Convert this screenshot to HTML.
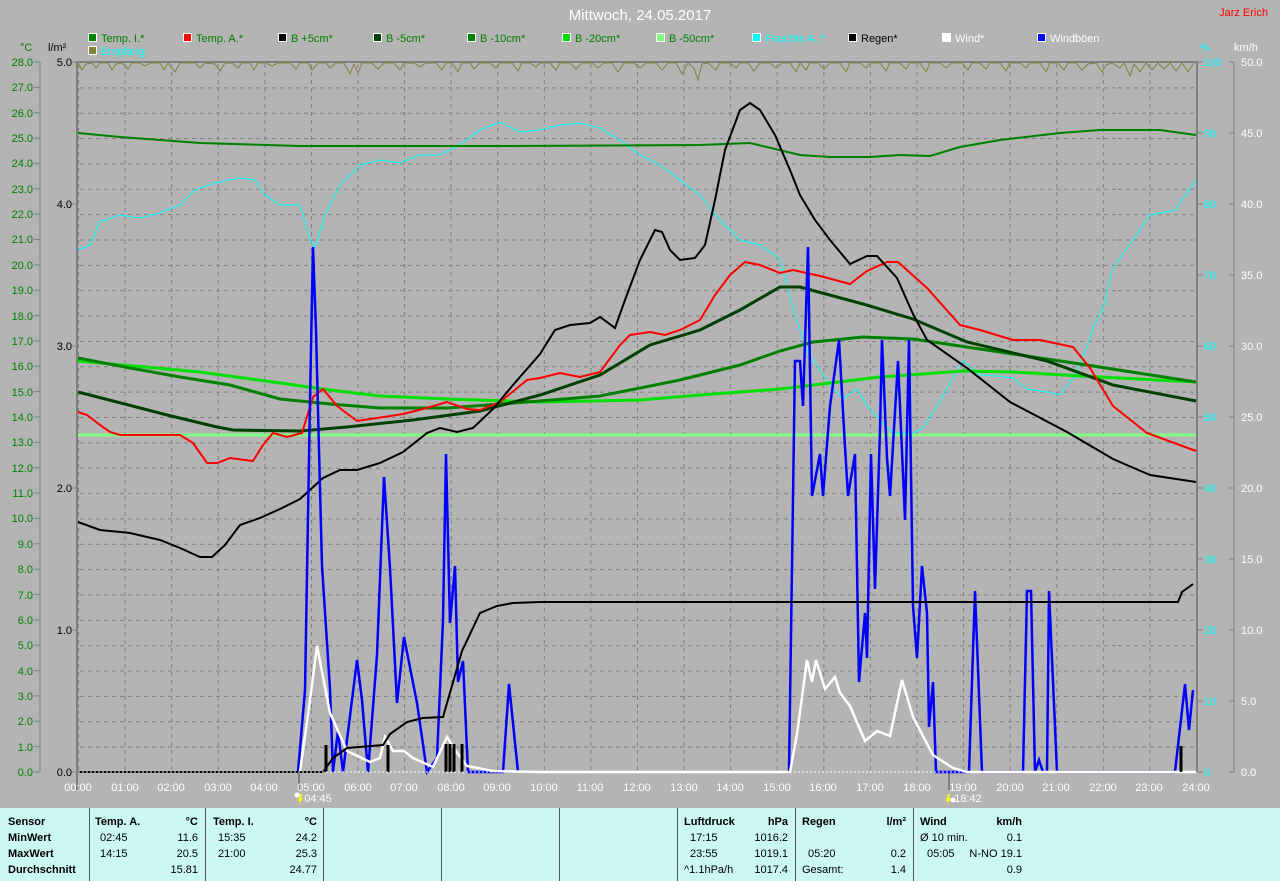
<!DOCTYPE html>
<html><head><meta charset="utf-8"><style>
html,body{margin:0;padding:0;background:#b4b4b4;}
body{width:1280px;height:881px;overflow:hidden;position:relative;font-family:"Liberation Sans",sans-serif;}
svg{position:absolute;left:0;top:0;}
.tbl{position:absolute;left:0;top:808px;width:1280px;height:73px;background:#ccf8f4;font-size:11px;color:#000;}
.tbl div{position:absolute;white-space:nowrap;}
.vl{top:0;width:1px;height:73px;background:#555;}
.b{font-weight:bold;}
.r{text-align:right;}
</style></head><body>
<svg width="1280" height="881" xmlns="http://www.w3.org/2000/svg" font-family="Liberation Sans, sans-serif">
<defs>
<pattern id="gh" x="0" y="62" width="1118" height="25.357" patternUnits="userSpaceOnUse">
<line x1="0" y1="0.5" x2="1118" y2="0.5" stroke="#808080" stroke-width="1" stroke-dasharray="4,4"/>
</pattern>
<pattern id="gv" x="78" y="0" width="46.583" height="710" patternUnits="userSpaceOnUse">
<line x1="0.5" y1="0" x2="0.5" y2="710" stroke="#808080" stroke-width="1" stroke-dasharray="4,4"/>
</pattern>
</defs>
<rect x="78" y="62" width="1118" height="710" fill="url(#gh)"/>
<rect x="78" y="62" width="1118" height="710" fill="url(#gv)"/>
<line x1="77" y1="62" x2="1197" y2="62" stroke="#808080" stroke-width="2"/>
<line x1="77" y1="61" x2="77" y2="790" stroke="#808080" stroke-width="2"/>
<line x1="1197" y1="61" x2="1197" y2="772" stroke="#808080" stroke-width="2"/>
<line x1="40" y1="62" x2="40" y2="772" stroke="#808080"/>
<line x1="1234" y1="62" x2="1234" y2="772" stroke="#808080"/>
<line x1="299" y1="772" x2="299" y2="790" stroke="#808080" stroke-width="2"/>
<line x1="949" y1="772" x2="949" y2="790" stroke="#808080" stroke-width="2"/>

<text x="640" y="20" fill="#fff" font-size="15" text-anchor="middle">Mittwoch, 24.05.2017</text>
<text x="1268" y="16" fill="#f00" font-size="11" text-anchor="end">Jarz Erich</text>

<g font-size="11">
<rect x="88.5" y="33.5" width="8" height="8" fill="#008000" stroke="#fff"/><text x="101" y="42" fill="#008000">Temp. I.*</text>
<rect x="183.5" y="33.5" width="8" height="8" fill="#f00" stroke="#fff"/><text x="196" y="42" fill="#008000">Temp. A.*</text>
<rect x="278.5" y="33.5" width="8" height="8" fill="#000" stroke="#fff"/><text x="291" y="42" fill="#008000">B +5cm*</text>
<rect x="373.5" y="33.5" width="8" height="8" fill="#004000" stroke="#fff"/><text x="386" y="42" fill="#008000">B -5cm*</text>
<rect x="467.5" y="33.5" width="8" height="8" fill="#008000" stroke="#fff"/><text x="480" y="42" fill="#008000">B -10cm*</text>
<rect x="562.5" y="33.5" width="8" height="8" fill="#00e000" stroke="#fff"/><text x="575" y="42" fill="#008000">B -20cm*</text>
<rect x="656.5" y="33.5" width="8" height="8" fill="#80ff80" stroke="#fff"/><text x="669" y="42" fill="#008000">B -50cm*</text>
<rect x="752.5" y="33.5" width="8" height="8" fill="#0ff" stroke="#fff"/><text x="765" y="42" fill="#0ff">Feuchte A. *</text>
<rect x="848.5" y="33.5" width="8" height="8" fill="#000" stroke="#fff"/><text x="861" y="42" fill="#000">Regen*</text>
<rect x="942.5" y="33.5" width="8" height="8" fill="#fff" stroke="#fff"/><text x="955" y="42" fill="#fff">Wind*</text>
<rect x="1037.5" y="33.5" width="8" height="8" fill="#00f" stroke="#fff"/><text x="1050" y="42" fill="#fff">Windböen</text>
<rect x="88.5" y="46.5" width="8" height="8" fill="#808040" stroke="#fff"/><text x="101" y="55" fill="#0ff">Empfang</text>
<text x="20" y="51" fill="#008000">°C</text>
<text x="48" y="51" fill="#000">l/m²</text>
<text x="1200" y="51" fill="#0ff">%</text>
<text x="1234" y="51" fill="#fff">km/h</text>
</g>

<g font-size="11" fill="#008000" text-anchor="end">
<text x="33" y="66">28.0</text><text x="33" y="91">27.0</text><text x="33" y="117">26.0</text><text x="33" y="142">25.0</text><text x="33" y="167">24.0</text><text x="33" y="193">23.0</text><text x="33" y="218">22.0</text><text x="33" y="243">21.0</text><text x="33" y="269">20.0</text><text x="33" y="294">19.0</text><text x="33" y="320">18.0</text><text x="33" y="345">17.0</text><text x="33" y="370">16.0</text><text x="33" y="396">15.0</text><text x="33" y="421">14.0</text><text x="33" y="446">13.0</text><text x="33" y="472">12.0</text><text x="33" y="497">11.0</text><text x="33" y="522">10.0</text><text x="33" y="548">9.0</text><text x="33" y="573">8.0</text><text x="33" y="599">7.0</text><text x="33" y="624">6.0</text><text x="33" y="649">5.0</text><text x="33" y="675">4.0</text><text x="33" y="700">3.0</text><text x="33" y="725">2.0</text><text x="33" y="751">1.0</text><text x="33" y="776">0.0</text>
</g>
<g stroke="#808080"><path d="M34 62H40M34 87.4H40M34 112.7H40M34 138.1H40M34 163.4H40M34 188.8H40M34 214.1H40M34 239.5H40M34 264.9H40M34 290.2H40M34 315.6H40M34 340.9H40M34 366.3H40M34 391.6H40M34 417H40M34 442.4H40M34 467.7H40M34 493.1H40M34 518.4H40M34 543.8H40M34 569.1H40M34 594.5H40M34 619.9H40M34 645.2H40M34 670.6H40M34 695.9H40M34 721.3H40M34 746.6H40M34 772H40"/>
<path d="M72 62H77M72 204H77M72 346H77M72 488H77M72 630H77M72 772H77"/>
<path d="M1229 62H1234M1229 133H1234M1229 204H1234M1229 275H1234M1229 346H1234M1229 417H1234M1229 488H1234M1229 559H1234M1229 630H1234M1229 701H1234M1229 772H1234"/>
<path d="M1198 62H1203M1198 133H1203M1198 204H1203M1198 275H1203M1198 346H1203M1198 417H1203M1198 488H1203M1198 559H1203M1198 630H1203M1198 701H1203M1198 772H1203"/></g>
<g font-size="11" fill="#000" text-anchor="end">
<text x="72" y="66">5.0</text><text x="72" y="208">4.0</text><text x="72" y="350">3.0</text><text x="72" y="492">2.0</text><text x="72" y="634">1.0</text><text x="72" y="776">0.0</text>
</g>
<g font-size="11" fill="#0ff">
<text x="1203" y="66">100</text><text x="1204" y="137">90</text><text x="1204" y="208">80</text><text x="1204" y="279">70</text><text x="1204" y="350">60</text><text x="1204" y="421">50</text><text x="1204" y="492">40</text><text x="1204" y="563">30</text><text x="1204" y="634">20</text><text x="1204" y="705">10</text><text x="1204" y="776">0</text>
</g>
<g font-size="11" fill="#fff">
<text x="1241" y="66">50.0</text><text x="1241" y="137">45.0</text><text x="1241" y="208">40.0</text><text x="1241" y="279">35.0</text><text x="1241" y="350">30.0</text><text x="1241" y="421">25.0</text><text x="1241" y="492">20.0</text><text x="1241" y="563">15.0</text><text x="1241" y="634">10.0</text><text x="1241" y="705">5.0</text><text x="1241" y="776">0.0</text>
</g>
<g font-size="11" fill="#fff" text-anchor="middle">
<text x="78" y="791">00:00</text><text x="125" y="791">01:00</text><text x="171" y="791">02:00</text><text x="218" y="791">03:00</text><text x="264" y="791">04:00</text><text x="311" y="791">05:00</text><text x="358" y="791">06:00</text><text x="404" y="791">07:00</text><text x="451" y="791">08:00</text><text x="497" y="791">09:00</text><text x="544" y="791">10:00</text><text x="590" y="791">11:00</text><text x="637" y="791">12:00</text><text x="684" y="791">13:00</text><text x="730" y="791">14:00</text><text x="777" y="791">15:00</text><text x="823" y="791">16:00</text><text x="870" y="791">17:00</text><text x="917" y="791">18:00</text><text x="963" y="791">19:00</text><text x="1010" y="791">20:00</text><text x="1056" y="791">21:00</text><text x="1103" y="791">22:00</text><text x="1149" y="791">23:00</text><text x="1196" y="791">24:00</text>
<text x="318" y="802">04:45</text><text x="968" y="802">18:42</text>
</g>
<circle cx="297" cy="795" r="2.5" fill="#fff"/><path d="M300 794l-2 7h2l-1 4 4-7h-2l1-4z" fill="#ff0"/>
<path d="M948 794l-2 7h2l-1 4 4-7h-2l1-4z" fill="#ff0"/><circle cx="953" cy="800" r="2.5" fill="#fff"/>

<polyline fill="none" stroke="#808040" stroke-width="1" points="78,63 82,70 86,64 92,63 96,68 100,63 108,63 112,70 116,64 122,63 128,69 132,63 140,63 145,66 150,63 160,63 164,70 168,63 175,72 180,63 188,63 195,63 200,68 205,63 215,64 220,71 225,63 232,63 238,68 242,63 250,63 254,70 258,63 266,63 272,66 278,63 290,63 296,69 300,63 308,63 312,70 318,63 326,63 330,68 336,63 344,63 350,74 354,64 358,73 362,63 372,63 378,69 384,63 394,63 400,70 404,63 414,63 420,67 426,63 436,63 442,70 446,63 452,63 458,72 462,63 470,63 474,69 480,63 490,63 496,68 500,63 512,63 518,71 522,63 530,63 536,67 540,63 550,63 556,70 560,63 570,63 576,69 582,63 592,63 598,68 604,63 612,63 618,72 624,63 634,63 640,68 646,63 656,63 662,70 668,63 676,63 682,74 688,63 694,68 698,80 702,64 708,63 716,70 720,63 730,63 736,68 740,63 748,63 754,71 760,63 770,63 776,68 782,63 790,63 796,72 800,63 806,70 810,63 818,63 824,69 830,63 840,63 846,72 850,63 860,63 866,68 870,63 880,63 886,71 890,63 900,63 906,69 910,63 920,63 926,72 930,63 940,63 946,68 952,63 962,63 968,70 972,63 980,63 986,69 990,63 1000,63 1006,71 1010,63 1020,63 1026,68 1030,63 1040,63 1046,72 1050,63 1058,63 1064,70 1068,63 1076,63 1082,70 1088,64 1096,63 1102,72 1106,65 1112,63 1120,68 1124,63 1130,76 1134,64 1140,72 1146,63 1152,70 1158,63 1164,69 1170,63 1176,71 1182,63 1188,72 1194,63"/>

<polyline fill="none" stroke="#0ff" stroke-width="1" points="78,250 90,245 100,222 120,215 140,218 160,213 180,205 195,190 215,183 240,178 255,180 265,195 280,205 300,205 310,240 315,247 325,215 340,185 360,165 380,160 400,163 420,155 440,155 460,145 480,130 500,122 520,132 540,130 560,125 580,123 600,128 620,140 640,155 660,165 680,180 700,195 720,220 740,240 760,245 780,259 793,309 807,351 830,385 843,399 857,389 867,406 880,420 893,433 913,433 923,428 937,406 953,378 963,361 980,375 997,376 1013,378 1027,389 1047,392 1060,395 1073,378 1087,347 1093,328 1103,309 1113,268 1133,240 1150,215 1175,210 1196,180"/>

<polyline fill="none" stroke="#008000" stroke-width="2" points="78,133 120,137 200,143 300,146 500,146 700,145 750,143 800,155 830,157 870,157 900,155 930,156 960,147 1000,140 1060,133 1100,130 1160,130 1196,135"/>

<line x1="78" y1="435" x2="1196" y2="435" stroke="#80ff80" stroke-width="3"/>

<polyline fill="none" stroke="#00e000" stroke-width="3" points="78,361 200,372 280,383 330,390 380,396 447,399 540,402 640,400 700,395 780,389 880,377 963,371 1013,372 1080,376 1196,382"/>
<polyline fill="none" stroke="#008000" stroke-width="3" points="78,358 130,368 180,377 230,385 280,399 330,404 380,408 447,408 540,401 600,396 680,380 740,365 780,351 813,342 863,337 913,339 980,349 1080,364 1196,382"/>
<polyline fill="none" stroke="#004000" stroke-width="3" points="78,392 117,402 167,415 217,427 233,430 300,431 347,427 413,420 480,411 540,395 600,375 650,345 700,330 740,310 780,287 800,287 863,304 913,319 967,342 1047,361 1113,385 1196,401"/>
<polyline fill="none" stroke="#f00" stroke-width="2" points="78,412 87,415 100,425 110,432 120,435 180,435 193,443 207,463 217,463 230,458 253,461 263,445 273,433 287,437 302,433 313,397 323,389 337,406 357,421 377,418 403,414 423,409 447,402 467,409 480,410 500,402 527,380 540,378 560,373 580,377 600,372 620,345 630,335 650,332 665,335 680,330 700,320 715,295 730,275 745,262 760,265 780,273 793,270 820,276 850,284 867,271 887,262 898,262 927,288 960,325 980,330 1013,340 1040,340 1073,347 1090,368 1113,406 1147,433 1196,451"/>
<polyline fill="none" stroke="#000" stroke-width="2" points="78,522 100,530 130,533 160,540 180,548 200,557 212,557 225,545 240,525 260,518 280,509 300,499 323,478 340,470 357,470 380,463 403,452 427,433 440,428 457,432 473,428 493,409 513,385 540,354 555,330 570,325 590,323 600,317 615,328 625,300 640,260 655,230 662,232 670,250 680,260 695,258 705,245 715,200 725,150 740,110 750,103 760,110 775,135 790,170 800,195 815,220 830,240 850,264 867,256 877,256 897,278 913,314 927,340 967,368 1010,402 1067,432 1113,459 1150,475 1196,482"/>

<polyline fill="none" stroke="#00f" stroke-width="2.5" points="298,772 305,690 310,400 313,247 316,330 319,450 322,566 330,689 333,772 338,731 343,772 357,660 362,700 368,772 377,655 384,477 390,568 397,703 404,637 417,703 427,772 437,758 443,620 446,454 450,623 455,566 458,682 463,661 468,772 503,772 509,684 518,772"/>
<polyline fill="none" stroke="#00f" stroke-width="2.5" points="789,772 795,361 800,361 803,406 808,247 812,496 820,454 823,496 830,406 839,340 845,447 848,496 855,454 859,682 865,613 867,658 871,454 875,589 880,430 882,340 887,458 890,496 898,361 905,520 909,340 913,606 917,658 922,566 927,613 929,727 933,682 936,772 969,772 975,591 982,772 1023,772 1027,591 1031,591 1035,772 1039,760 1043,772 1047,772 1049,591 1057,772 1175,772 1185,684 1189,730 1193,690"/>
<polyline fill="none" stroke="#fff" stroke-width="2.5" points="300,772 310,700 317,646 330,713 347,751 370,762 380,758 385,737 393,751 404,751 413,758 433,767 447,737 455,750 467,766 493,771 540,772 790,772 797,734 807,660 812,682 816,660 825,689 835,677 840,693 850,706 865,741 877,731 890,736 902,680 913,717 933,755 953,768 967,772 1196,772"/>
<polyline fill="none" stroke="#000" stroke-width="2" points="78,772 323,772 333,758 347,748 383,745 390,734 407,722 423,718 443,717 462,651 480,613 497,606 513,603 540,602 1178,602 1182,592 1193,584"/>
<g stroke="#000" stroke-width="3"><path d="M326 772V745M388 772V745M446 772V744M450 772V744M454 772V744M462 772V744M1181 772V746"/></g>
<line x1="78" y1="772" x2="1196" y2="772" stroke="#fff" stroke-width="1" stroke-dasharray="2,2"/>
</svg>

<div class="tbl">
<div class="vl" style="left:89px"></div><div class="vl" style="left:205px"></div><div class="vl" style="left:323px"></div><div class="vl" style="left:441px"></div><div class="vl" style="left:559px"></div><div class="vl" style="left:677px"></div><div class="vl" style="left:795px"></div><div class="vl" style="left:913px"></div>
<div class="b" style="left:8px;top:8px">Sensor</div>
<div class="b" style="left:8px;top:24px">MinWert</div>
<div class="b" style="left:8px;top:40px">MaxWert</div>
<div class="b" style="left:8px;top:56px">Durchschnitt</div>
<div class="b" style="left:95px;top:8px">Temp. A.</div><div class="b r" style="right:1082px;top:8px">°C</div>
<div style="left:100px;top:24px">02:45</div><div class="r" style="right:1082px;top:24px">11.6</div>
<div style="left:100px;top:40px">14:15</div><div class="r" style="right:1082px;top:40px">20.5</div>
<div class="r" style="right:1082px;top:56px">15.81</div>
<div class="b" style="left:213px;top:8px">Temp. I.</div><div class="b r" style="right:963px;top:8px">°C</div>
<div style="left:218px;top:24px">15:35</div><div class="r" style="right:963px;top:24px">24.2</div>
<div style="left:218px;top:40px">21:00</div><div class="r" style="right:963px;top:40px">25.3</div>
<div class="r" style="right:963px;top:56px">24.77</div>
<div class="b" style="left:684px;top:8px">Luftdruck</div><div class="b r" style="right:492px;top:8px">hPa</div>
<div style="left:690px;top:24px">17:15</div><div class="r" style="right:492px;top:24px">1016.2</div>
<div style="left:690px;top:40px">23:55</div><div class="r" style="right:492px;top:40px">1019.1</div>
<div style="left:684px;top:56px">^1.1hPa/h</div><div class="r" style="right:492px;top:56px">1017.4</div>
<div class="b" style="left:802px;top:8px">Regen</div><div class="b r" style="right:374px;top:8px">l/m²</div>
<div style="left:808px;top:40px">05:20</div><div class="r" style="right:374px;top:40px">0.2</div>
<div style="left:802px;top:56px">Gesamt:</div><div class="r" style="right:374px;top:56px">1.4</div>
<div class="b" style="left:920px;top:8px">Wind</div><div class="b r" style="right:258px;top:8px">km/h</div>
<div style="left:920px;top:24px">Ø 10 min.</div><div class="r" style="right:258px;top:24px">0.1</div>
<div style="left:927px;top:40px">05:05</div><div class="r" style="right:258px;top:40px">N-NO 19.1</div>
<div class="r" style="right:258px;top:56px">0.9</div>
</div>
</body></html>
